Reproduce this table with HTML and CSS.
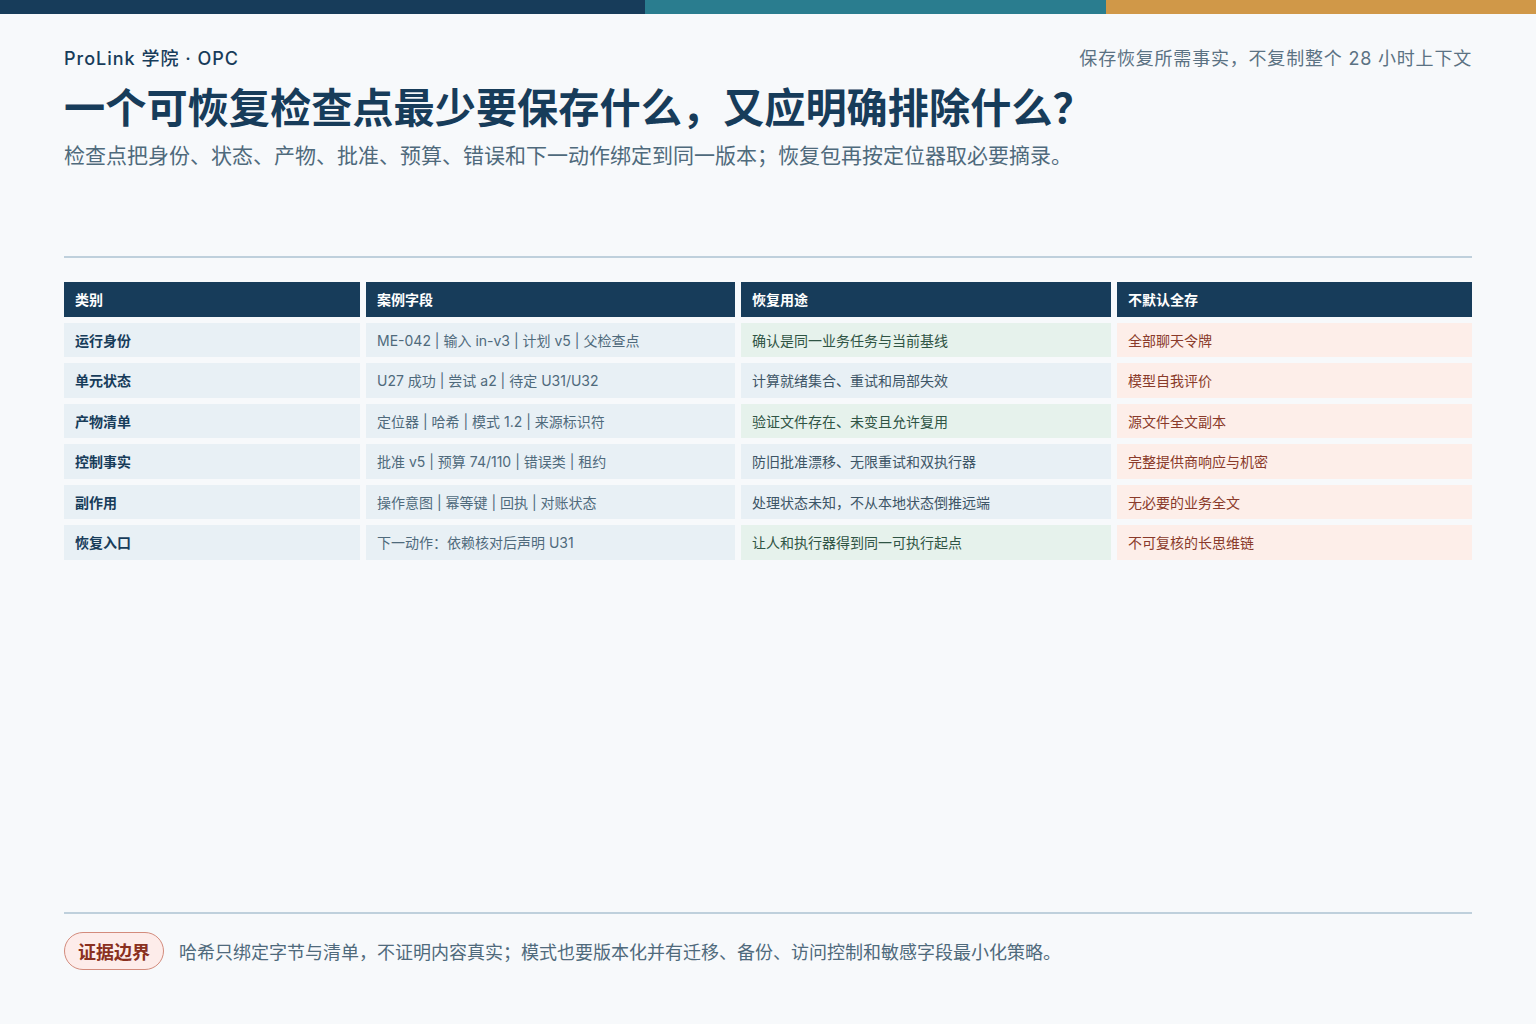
FILE: index.html
```html
<!DOCTYPE html>
<html lang="zh-CN">
<head>
<meta charset="utf-8">
<title>可恢复检查点</title>
<link rel="stylesheet" href="styles.css">
</head>
<body>
<div class="page">
  <div class="topbar"><span class="seg seg-dark"></span><span class="seg seg-teal"></span><span class="seg seg-gold"></span></div>
  <main class="main">
    <header class="head">
      <div class="meta">
        <span class="brand">ProLink 学院 · OPC</span>
        <span class="tagline">保存恢复所需事实，不复制整个 28 小时上下文</span>
      </div>
      <h1 class="title">一个可恢复检查点最少要保存什么，又应明确排除什么？</h1>
      <p class="subtitle">检查点把身份、状态、产物、批准、预算、错误和下一动作绑定到同一版本；恢复包再按定位器取必要摘录。</p>
    </header>
    <hr class="rule">
    <div class="table">
      <div class="th">类别</div>
      <div class="th">案例字段</div>
      <div class="th">恢复用途</div>
      <div class="th">不默认全存</div>

      <div class="td cat">运行身份</div>
      <div class="td field">ME-042 | 输入 in-v3 | 计划 v5 | 父检查点</div>
      <div class="td use green">确认是同一业务任务与当前基线</div>
      <div class="td excl">全部聊天令牌</div>

      <div class="td cat">单元状态</div>
      <div class="td field">U27 成功 | 尝试 a2 | 待定 U31/U32</div>
      <div class="td use blue">计算就绪集合、重试和局部失效</div>
      <div class="td excl">模型自我评价</div>

      <div class="td cat">产物清单</div>
      <div class="td field">定位器 | 哈希 | 模式 1.2 | 来源标识符</div>
      <div class="td use green">验证文件存在、未变且允许复用</div>
      <div class="td excl">源文件全文副本</div>

      <div class="td cat">控制事实</div>
      <div class="td field">批准 v5 | 预算 74/110 | 错误类 | 租约</div>
      <div class="td use blue">防旧批准漂移、无限重试和双执行器</div>
      <div class="td excl">完整提供商响应与机密</div>

      <div class="td cat">副作用</div>
      <div class="td field">操作意图 | 幂等键 | 回执 | 对账状态</div>
      <div class="td use blue">处理状态未知，不从本地状态倒推远端</div>
      <div class="td excl">无必要的业务全文</div>

      <div class="td cat">恢复入口</div>
      <div class="td field">下一动作：依赖核对后声明 U31</div>
      <div class="td use green">让人和执行器得到同一可执行起点</div>
      <div class="td excl">不可复核的长思维链</div>
    </div>
    <div class="spacer"></div>
    <footer class="foot">
      <span class="badge">证据边界</span>
      <span class="note">哈希只绑定字节与清单，不证明内容真实；模式也要版本化并有迁移、备份、访问控制和敏感字段最小化策略。</span>
    </footer>
  </main>
</div>
</body>
</html>
```
FILE: styles.css
```css
* { box-sizing: border-box; }
html, body { margin: 0; padding: 0; }
body {
  background: #f7f9fb;
  font-family: Inter, "Noto Sans CJK SC", sans-serif;
  color: #173c5a;
}
.page {
  width: 1536px;
  height: 1024px;
  display: flex;
  flex-direction: column;
}
.topbar {
  display: flex;
  height: 14px;
  flex: none;
}
.seg { display: block; height: 100%; }
.seg-dark { width: 645px; background: #173c5a; }
.seg-teal { width: 461px; background: #2a7d8f; }
.seg-gold { flex: 1; background: #d09848; }

.main {
  flex: 1;
  display: flex;
  flex-direction: column;
  padding: 32px 64px 54px;
}
.meta {
  display: flex;
  justify-content: space-between;
  align-items: center;
  height: 22px;
}
.brand {
  font-size: 18px;
  font-weight: 500;
  letter-spacing: 1px;
  color: #173c5a;
}
.tagline {
  font-size: 18px;
  letter-spacing: 0.8px;
  color: #5b7283;
}
.title {
  margin: 15px 0 0;
  font-size: 41.2px;
  line-height: 50px;
  font-weight: 700;
  color: #173c5a;
}
.subtitle {
  margin: 8px 0 0;
  font-size: 21px;
  line-height: 29px;
  color: #4f6a7c;
}
.rule {
  margin: 86px 0 0;
  border: 0;
  height: 2px;
  background: #bfd0dc;
}
.table {
  margin-top: 24px;
  display: grid;
  grid-template-columns: 296fr 369fr 370fr 355fr;
  grid-auto-rows: 34.5px;
  gap: 6px;
}
.th, .td {
  display: flex;
  align-items: center;
  padding: 0 11px;
  font-size: 14px;
  white-space: nowrap;
}
.th {
  background: #173c5a;
  color: #ffffff;
  font-weight: 700;
}
.cat {
  background: #e8f0f5;
  color: #173c5a;
  font-weight: 700;
}
.field {
  background: #e8f0f5;
  color: #4f6a7c;
}
.use.green {
  background: #e6f2ec;
  color: #2f5444;
}
.use.blue {
  background: #e8f0f5;
  color: #3d5566;
}
.excl {
  background: #fdeee9;
  color: #8a3a2a;
}
.spacer { flex: 1; }
.foot {
  border-top: 2px solid #bfd0dc;
  padding-top: 18px;
  display: flex;
  align-items: center;
  gap: 15px;
}
.badge {
  display: inline-flex;
  align-items: center;
  height: 38px;
  padding: 0 13px;
  border: 1px solid #d38b7c;
  border-radius: 19px;
  background: #fdecea;
  color: #8a3020;
  font-size: 18px;
  font-weight: 700;
}
.note {
  font-size: 18px;
  color: #4f6a7c;
}
```
